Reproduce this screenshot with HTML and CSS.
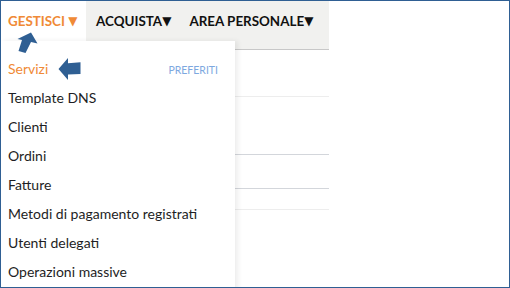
FILE: index.html
```html
<!DOCTYPE html>
<html lang="it">
<head>
<meta charset="utf-8">
<link rel="stylesheet" href="styles.css">
</head>
<body>
<div class="frame">
  <div class="page">
    <nav class="nav">
      <div class="nav-item active">GESTISCI <span class="caret">▼</span></div>
      <div class="nav-rest">
        <div class="nav-item">ACQUISTA<span class="caret">▼</span></div>
        <div class="nav-item">AREA PERSONALE<span class="caret">▼</span></div>
      </div>
    </nav>
    <div class="content">
      <div class="row r1"></div>
      <div class="row r2"></div>
      <div class="row r3"></div>
      <div class="row r4"></div>
    </div>
  </div>
  <ul class="dropdown">
    <li class="item current"><span>Servizi</span><span class="fav">PREFERITI</span></li>
    <li class="item">Template DNS</li>
    <li class="item">Clienti</li>
    <li class="item">Ordini</li>
    <li class="item">Fatture</li>
    <li class="item">Metodi di pagamento registrati</li>
    <li class="item">Utenti delegati</li>
    <li class="item">Operazioni massive</li>
  </ul>
  <svg class="arrows" width="100" height="90" viewBox="0 0 100 90">
    <polygon points="31,32.5 37.5,43.5 31,42 25.5,53 18.5,51 22,40 17.5,39" />
    <polygon points="58.5,69 68,58 68,63.2 80.5,62.3 80.5,74 68,74.6 68,80" />
  </svg>
</div>
</body>
</html>
```

FILE: styles.css
```css
html, body {
  margin: 0;
  padding: 0;
  background: #ffffff;
}

.frame {
  position: relative;
  width: 510px;
  height: 288px;
  box-sizing: border-box;
  border: 1px solid #2f5f93;
  overflow: hidden;
  font-family: Lato, "Liberation Sans", sans-serif;
}

.page {
  width: 328px;
}

.nav {
  display: flex;
  height: 49px;
}

.nav-item {
  font-weight: 700;
  font-size: 13.4px;
  line-height: 40px;
  color: #111111;
  white-space: nowrap;
}

.nav-item.active {
  width: 78px;
  padding-left: 7px;
  color: #f08a36;
  background: #ffffff;
}

.caret {
  font-family: "DejaVu Sans", sans-serif;
  font-size: 12px;
  position: relative;
  top: -1px;
}

.nav-rest {
  flex: 1;
  display: flex;
  gap: 18px;
  padding-left: 10px;
  background: #f1f1ef;
  border-bottom: 1px solid #c8c8c8;
}

.row {
  border-bottom: 1px solid #d3d6db;
}

.r1 { height: 46px; border-bottom-color: #ededed; }
.r2 { height: 57px; }
.r3 { height: 33px; }
.r4 { height: 20px; border-bottom-color: #ededed; }

.dropdown {
  position: absolute;
  left: 0;
  top: 40px;
  width: 234px;
  height: 260px;
  margin: 0;
  padding: 13px 0 0 0;
  list-style: none;
  background: #ffffff;
  box-shadow: 3px 0 5px rgba(0, 0, 0, 0.07);
}

.item {
  display: flex;
  justify-content: space-between;
  align-items: baseline;
  height: 29px;
  line-height: 29px;
  padding: 0 17px 0 7px;
  font-size: 14px;
  color: #1e1e24;
}

.item.current {
  color: #f08a36;
}

.fav {
  font-size: 10.5px;
  color: #7ea8df;
}

.arrows {
  position: absolute;
  left: -1px;
  top: -1px;
  fill: #2f5f93;
}
```
